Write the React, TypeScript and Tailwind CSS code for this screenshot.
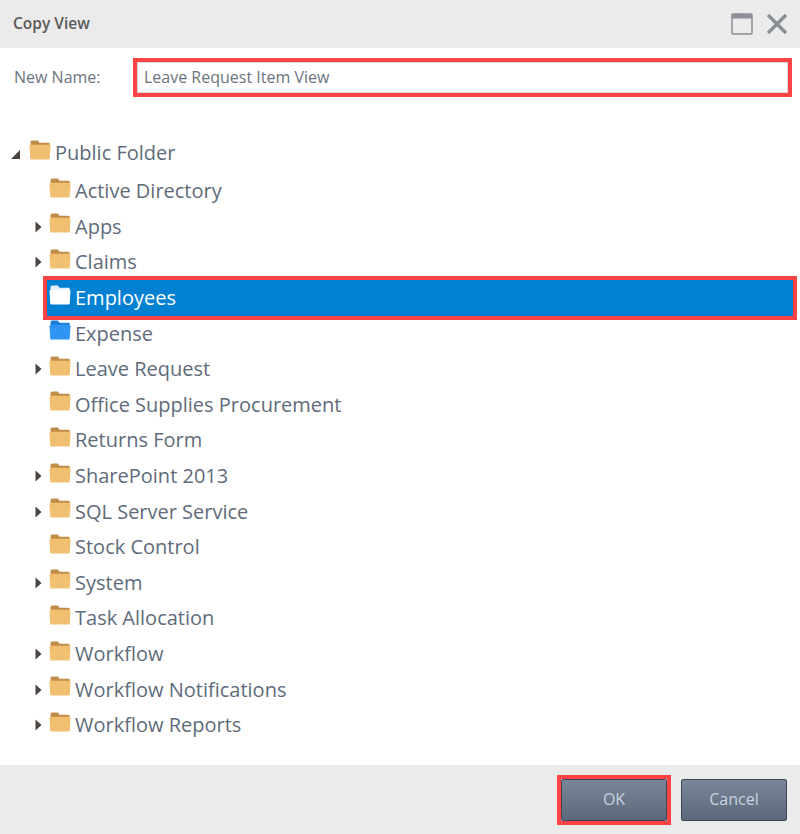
import React from "react";

const font = { fontFamily: '"Open Sans", sans-serif' };

const Folder = ({ variant = "orange" }: { variant?: "orange" | "white" | "blue" }) => {
  const back = variant === "orange" ? "#c08c48" : variant === "white" ? "#e6f2fb" : "#1b7fd8";
  const front = variant === "orange" ? "#f0c070" : variant === "white" ? "#ffffff" : "#2f95f5";
  return (
    <svg width="22" height="20" viewBox="0.500 0.500 21 19" className="shrink-0">
      <path d="M2 5V2.500C2 1.700 2.600 1 3.400 1h5c.6 0 1 .3 1.300.8L10.500 3H19c.8 0 1.300.6 1.300 1.300V6H2z" fill={back} />
      <path d="M1 6.500C1 5.700 1.600 5 2.400 5h17.200c.8 0 1.400.7 1.400 1.500L20.300 18c-.1.6-.6 1-1.200 1H2.900c-.6 0-1.100-.4-1.200-1L1 6.500z" fill={front} />
    </svg>
  );
};

const Caret = () => (
  <svg width="7" height="12" viewBox="0 0 7 12" className="shrink-0">
    <path d="M0.500 0.500L6.500 6L0.500 11.500z" fill="#4a4440" />
  </svg>
);

type Item = { name: string; kids?: boolean; selected?: boolean; blue?: boolean };

const items: Item[] = [
  { name: "Active Directory" },
  { name: "Apps", kids: true },
  { name: "Claims", kids: true },
  { name: "Employees", selected: true },
  { name: "Expense", blue: true },
  { name: "Leave Request", kids: true },
  { name: "Office Supplies Procurement" },
  { name: "Returns Form" },
  { name: "SharePoint 2013", kids: true },
  { name: "SQL Server Service", kids: true },
  { name: "Stock Control" },
  { name: "System", kids: true },
  { name: "Task Allocation" },
  { name: "Workflow", kids: true },
  { name: "Workflow Notifications", kids: true },
  { name: "Workflow Reports", kids: true },
];

const Row = ({ item }: { item: Item }) => {
  const row = (
    <div
      className={
        "flex h-[35.6px] items-center " +
        (item.selected ? "ml-[17px] w-[746px] bg-[#0281d2] text-white" : "text-[#5f6b7a]")
      }
    >
      <div className={"flex shrink-0 items-center " + (item.selected ? "w-[2px]" : "w-[19px] pl-[5px]")}>
        {item.kids && <Caret />}
      </div>
      <div className="mr-[4px] -mt-[7px] flex">
        <Folder variant={item.selected ? "white" : item.blue ? "blue" : "orange"} />
      </div>
      <span>{item.name}</span>
    </div>
  );
  if (item.selected) {
    return (
      <div className="relative">
        {row}
        <div className="pointer-events-none absolute -top-[4px] -bottom-[4px] left-[13px] right-[3px] border-[4px] border-[#fb4245]" />
      </div>
    );
  }
  return row;
};

export default function App() {
  return (
    <div className="flex h-[834px] w-[800px] flex-col bg-white" style={font}>
      <div className="flex h-[48px] shrink-0 items-center justify-between bg-[#ebebeb] pl-[13px] pr-[12px]">
        <span className="text-[15.5px] font-semibold text-[#5a5a5a]">Copy View</span>
        <div className="flex items-center gap-[13px]">
          <svg width="22" height="22" viewBox="0 0 22 22">
            <rect x="1" y="1" width="20" height="20" rx="1" fill="none" stroke="#8a8f96" strokeWidth="1.500" />
            <rect x="1" y="1" width="20" height="4.500" fill="#8a8f96" />
          </svg>
          <svg width="22" height="22" viewBox="0 0 22 22">
            <path d="M2 2L20 20M20 2L2 20" stroke="#8a8f96" strokeWidth="3.500" />
          </svg>
        </div>
      </div>

      <div className="mt-[10px] flex h-[39px] shrink-0 items-center pl-[14px] pr-[8px]">
        <label className="w-[119px] pb-[2px] text-[16px] text-[#6b7480]">New Name:</label>
        <div className="flex h-[39px] flex-1 items-center border-[4px] border-[#fb4245] bg-white pb-[2px] pl-[7px] text-[16px] text-[#6b7480] shadow-[inset_0_0_0_1px_#d8d8d8]">
          Leave Request Item View
        </div>
      </div>

      <div className="flex-1 pl-[11px] text-[20px] leading-none">
        <div className="mt-[38px] mb-[2.5px] flex h-[36px] items-center text-[#5f6b7a]">
          <svg width="9" height="9" viewBox="0 0 9 9" className="mr-[9px] mt-[3px] shrink-0">
            <path d="M9 0V9H0z" fill="#4a4440" />
          </svg>
          <div className="mr-[4px] -mt-[7px] flex">
            <Folder />
          </div>
          <span>Public Folder</span>
        </div>
        <div className="pl-[19px]">
          {items.map((item) => (
            <Row key={item.name} item={item} />
          ))}
        </div>
      </div>

      <div className="flex h-[69px] shrink-0 items-center justify-end gap-[10px] bg-[#ebebeb] pr-[13px]">
        <div className="border-[4px] border-[#fb4245]">
          <button className="block h-[42px] w-[106px] rounded-[2px] border border-[#3c4657] bg-gradient-to-b from-[#7a8597] to-[#5d687a] pb-[2px] text-[16px] text-[#c8d3e0]">
            OK
          </button>
        </div>
        <button className="h-[42px] w-[106px] rounded-[2px] border border-[#3c4657] bg-gradient-to-b from-[#7a8597] to-[#5d687a] pb-[2px] text-[16px] text-[#c8d3e0]">
          Cancel
        </button>
      </div>
    </div>
  );
}
